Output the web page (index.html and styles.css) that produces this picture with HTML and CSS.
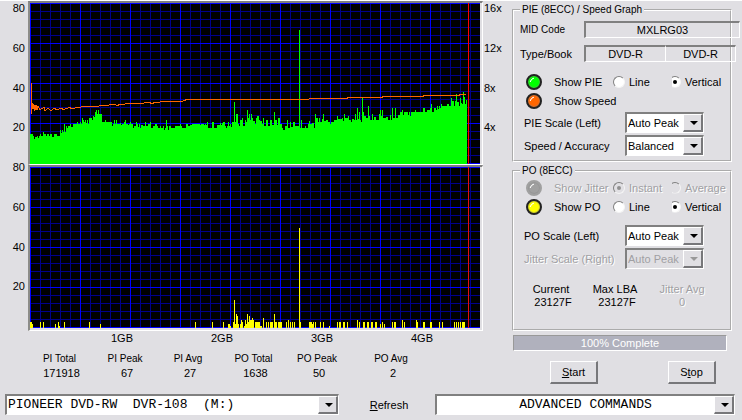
FILE: index.html
```html
<!DOCTYPE html>
<html lang="en">
<head>
<meta charset="utf-8">
<title>Disc quality scan</title>
<link rel="stylesheet" href="styles.css">
</head>
<body>
<main class="window">
  <section class="graphs">
    <div class="plots">
      <div class="axis axis-left">
        <span>80</span><span>60</span><span>40</span><span>20</span>
        <span>80</span><span>60</span><span>40</span><span>20</span>
      </div>
      <div class="charts">
        <div class="chart">
          <svg viewBox="0 0 450 161" shape-rendering="crispEdges" role="img" aria-label="PIE and speed">
            <defs>
              <pattern id="minor" width="10" height="8" patternUnits="userSpaceOnUse">
                <path d="M0 0H10V1H1V8H0Z" fill="#00008b"/>
              </pattern>
              <pattern id="major" width="50" height="40" patternUnits="userSpaceOnUse">
                <path d="M0 0H50V1H1V40H0Z" fill="#0000ff"/>
              </pattern>
            </defs>
            <rect width="450" height="161" fill="#000"/>
            <rect width="450" height="161" fill="url(#minor)"/>
            <rect width="450" height="161" fill="url(#major)"/>
            <path id="pie" fill="#00ff00"/>
            <path id="speed" fill="none" stroke="#ff6600"/>
            <path d="M438 0h1v161h-1z" fill="#ff0000"/>
          </svg>
        </div>
        <div class="chart chart-last">
          <svg viewBox="0 0 450 161" shape-rendering="crispEdges" role="img" aria-label="PO">
            <rect width="450" height="161" fill="#000"/>
            <rect width="450" height="161" fill="url(#minor)"/>
            <rect width="450" height="161" fill="url(#major)"/>
            <path id="po" fill="#ffff00"/>
            <path d="M438 0h1v161h-1z" fill="#e01010"/>
          </svg>
        </div>
      </div>
      <div class="axis axis-right">
        <span>16x</span><span>12x</span><span>8x</span><span>4x</span>
      </div>
    </div>
    <div class="capacity"><span>1GB</span><span>2GB</span><span>3GB</span><span>4GB</span></div>
    <dl class="stats">
      <div><dt>PI Total</dt><dd>171918</dd></div>
      <div><dt>PI Peak</dt><dd>67</dd></div>
      <div><dt>PI Avg</dt><dd>27</dd></div>
      <div><dt>PO Total</dt><dd>1638</dd></div>
      <div><dt>PO Peak</dt><dd>50</dd></div>
      <div><dt>PO Avg</dt><dd>2</dd></div>
    </dl>
  </section>

  <section class="panel">
    <fieldset class="group group-pie">
      <legend>PIE (8ECC) / Speed Graph</legend>
      <div class="info">
        <span class="small">MID Code</span>
        <div class="fields fields-wide"><output class="sunken">MXLRG03</output></div>
      </div>
      <div class="info">
        <span>Type/Book</span>
        <div class="fields"><output class="sunken">DVD-R</output><output class="sunken book">DVD-R</output></div>
      </div>
      <div class="toggles toggles-first">
        <label class="led-label"><input type="checkbox" class="led green" checked>Show PIE</label>
        <label class="choice"><input type="radio" name="pie">Line</label>
        <label class="choice"><input type="radio" name="pie" class="cut" checked>Vertical</label>
      </div>
      <div class="toggles">
        <label class="led-label"><input type="checkbox" class="led orange" checked>Show Speed</label>
      </div>
      <div class="setting">
        <label for="pie-scale">PIE Scale (Left)</label>
        <div class="combo"><select id="pie-scale"><option>Auto Peak</option></select></div>
      </div>
      <div class="setting">
        <label for="accuracy">Speed / Accuracy</label>
        <div class="combo"><select id="accuracy"><option>Balanced</option></select></div>
      </div>
    </fieldset>

    <fieldset class="group group-po">
      <legend>PO (8ECC)</legend>
      <div class="toggles off">
        <label class="led-label"><input type="checkbox" class="led gray" disabled>Show Jitter</label>
        <label class="choice"><input type="radio" name="jitter" disabled checked>Instant</label>
        <label class="choice"><input type="radio" name="jitter" class="cut" disabled>Average</label>
      </div>
      <div class="toggles">
        <label class="led-label"><input type="checkbox" class="led yellow" checked>Show PO</label>
        <label class="choice"><input type="radio" name="po">Line</label>
        <label class="choice"><input type="radio" name="po" class="cut" checked>Vertical</label>
      </div>
      <div class="setting setting-gap">
        <label for="po-scale">PO Scale (Left)</label>
        <div class="combo"><select id="po-scale"><option>Auto Peak</option></select></div>
      </div>
      <div class="setting off">
        <label for="jitter-scale">Jitter Scale (Right)</label>
        <div class="combo"><select id="jitter-scale" disabled><option>Auto Peak</option></select></div>
      </div>
      <dl class="readout">
        <div><dt>Current</dt><dd>23127F</dd></div>
        <div><dt>Max LBA</dt><dd>23127F</dd></div>
        <div class="off"><dt>Jitter Avg</dt><dd>0</dd></div>
      </dl>
    </fieldset>

    <div class="progress" role="progressbar" aria-valuenow="100">100% Complete</div>
    <div class="actions">
      <button type="button" class="push"><u>S</u>tart</button>
      <button type="button" class="push">S<u>t</u>op</button>
    </div>
  </section>
</main>

<footer class="bar">
  <div class="combo drive"><select aria-label="Drive"><option>PIONEER DVD-RW&nbsp; DVR-108&nbsp; (M:)</option></select></div>
  <button type="button" class="flat"><u>R</u>efresh</button>
  <div class="combo commands"><select aria-label="Commands"><option>ADVANCED COMMANDS</option></select></div>
</footer>
<script src="charts.js"></script>
</body>
</html>
```
FILE: styles.css
```css
* {
  box-sizing: border-box;
}

body {
  margin: 0;
  border-top: 1px solid #fff;
  background: #e0dfe3;
  color: #000;
  font: 11px/14px "Liberation Sans", Arial, sans-serif;
}

button,
select,
input {
  font: inherit;
  color: inherit;
  margin: 0;
}

dl,
dd {
  margin: 0;
}

.small,
legend,
.stats dt {
  font-size: 10px;
}

.off {
  color: #a09fa3;
  text-shadow: 1px 1px 0 #fff;
}

.window {
  display: flex;
}

.graphs {
  flex: 1;
  min-width: 0;
}

.plots {
  display: grid;
  grid-template-columns: 28px minmax(0, 1fr) 29px;
}

.axis {
  display: grid;
  grid-template-rows: repeat(8, 1fr);
  padding-bottom: 12px;
}

.axis-left {
  text-align: right;
  padding-right: 3px;
}

.axis-right {
  padding-left: 1px;
}

.chart {
  border: 2px solid #808080;
  border-left-color: #8c8c88;
  border-right: 1px solid #fff;
  border-bottom: 1px solid #fff;
  padding-right: 2px;
}

.chart-last {
  padding-bottom: 2px;
}

.chart svg {
  display: block;
  width: 100%;
  height: auto;
}

.capacity {
  display: grid;
  grid-template-columns: repeat(4, 1fr);
  margin: 0 40px 0 72px;
  text-align: center;
}

.stats {
  display: grid;
  grid-template-columns: 65fr 66fr 60fr 71fr 56fr 92fr;
  margin: 7px 75px 0 27px;
  text-align: center;
}

.stats dd {
  padding-left: 4px;
}

.panel {
  flex: 0 0 230px;
  padding: 3px 10px 0 0;
}

.group {
  min-width: 0;
  margin: 0;
  padding: 0 0 0 6px;
  border: 2px groove #fff;
}

.group-pie {
  padding-bottom: 4px;
}

.group-po {
  margin-top: 3px;
  padding-top: 1px;
  padding-bottom: 20px;
}

legend {
  padding: 0 2px;
  line-height: 12px;
}

.info {
  display: grid;
  grid-template-columns: 64px 1fr;
  align-items: center;
  margin-top: 5px;
}

.info + .info {
  margin-top: 7px;
}

.fields {
  display: flex;
  margin-right: -6px;
}

.fields-wide {
  margin-right: -10px;
}

.sunken {
  flex: 1;
  height: 17px;
  border: 2px solid #808080;
  border-right: 1px solid #fff;
  border-bottom: 1px solid #fff;
  text-align: center;
}

.book {
  flex: 0 0 46%;
  border-left: 0;
}

.toggles {
  display: grid;
  grid-template-columns: 93px 56px 1fr;
  align-items: center;
  height: 19px;
}

.toggles-first {
  margin-top: 10px;
}

.led-label,
.choice {
  display: flex;
  align-items: center;
  white-space: nowrap;
}

.led-label {
  gap: 12px;
  padding-left: 6px;
}

.choice {
  gap: 4px;
}

.led {
  appearance: none;
  position: relative;
  width: 16px;
  height: 16px;
  flex: none;
  border: 2px solid #222;
  border-radius: 50%;
  box-shadow: inset 0 0 0 1px #8886;
}

.led::before {
  content: "";
  position: absolute;
  left: 2px;
  top: 2px;
  width: 6px;
  height: 6px;
  border: 1px solid transparent;
  border-left-color: #fff;
  border-radius: 50%;
  transform: rotate(45deg);
}

.green { background: #00ff00; }
.orange { background: #ff6600; }
.yellow { background: #ffff00; }

.gray {
  background: #a0a0a0;
  border-color: #a0a0a0;
}

.choice input {
  appearance: none;
  display: grid;
  place-items: center;
  width: 12px;
  height: 12px;
  flex: none;
  border: 1px solid #808080;
  border-right-color: #f4f4f4;
  border-bottom-color: #f4f4f4;
  border-radius: 50%;
  background: #fff;
}

.choice input:checked::before {
  content: "";
  width: 4px;
  height: 4px;
  border-radius: 50%;
  background: #000;
}

.choice input:disabled {
  background: #e0dfe3;
}

.choice input:disabled::before {
  background: #909090;
}

.choice .cut {
  clip-path: inset(0 0 0 3px);
}

.setting {
  display: grid;
  grid-template-columns: 1fr 79px;
  align-items: center;
  margin: 2px 26px 0 0;
  padding-left: 4px;
}

.setting-gap {
  margin-top: 9px;
}

.combo {
  position: relative;
  border: 2px solid #808080;
  border-right: 1px solid #fff;
  border-bottom: 1px solid #fff;
  background: #fff;
}

.combo select {
  appearance: none;
  display: block;
  width: 100%;
  height: 18px;
  border: 0;
  border-radius: 0;
  padding: 0 16px 1px 1px;
  background: transparent;
  opacity: 1;
}

.combo::before {
  content: "";
  position: absolute;
  top: 0;
  right: 0;
  bottom: 0;
  width: 17px;
  border: 1px solid #fff;
  border-right: 2px solid #77777a;
  border-bottom: 2px solid #77777a;
  background: #e0dfe3;
}

.combo::after {
  content: "";
  position: absolute;
  top: 7px;
  right: 5px;
  border: 4px solid transparent;
  border-top-color: #000;
  border-bottom: 0;
}

.off .combo {
  background: #e0dfe3;
}

.off .combo::after {
  border-top-color: #999;
}

.readout {
  display: grid;
  grid-template-columns: 62px 66px 1fr;
  margin: 14px 10px 0 0;
  padding-right: 4px;
  text-align: center;
}

.readout div {
  line-height: 13px;
}

.readout dd {
  padding-left: 4px;
}

.readout .off dd {
  padding-left: 0;
}

.progress {
  height: 16px;
  margin: 4px 5px 0 1px;
  border: 1px solid #999;
  border-right-color: #fff;
  border-bottom-color: #fff;
  background: #b0b1bd;
  color: #fff;
  text-align: center;
}

.actions {
  display: flex;
  justify-content: space-between;
  margin: 10px 16px 0 38px;
}

.push {
  width: 48px;
  height: 23px;
  padding: 0;
  border: 1px solid #fff;
  border-right: 2px solid #77777a;
  border-bottom: 2px solid #77777a;
  background: #e0dfe3;
}

.bar {
  display: grid;
  grid-template-columns: 334fr 96fr 300fr;
  margin: 10px 7px 0 5px;
}

.bar .combo {
  font: 13px/16px "Liberation Mono", "Courier New", monospace;
}

.bar .commands select {
  padding-left: 16px;
  text-align: center;
  text-align-last: center;
}

.flat {
  border: 0;
  padding: 0 0 0 4px;
  background: transparent;
}
```
FILE: charts.js
```js
// Each pair is a column and the top of the bars from there on, in window pixels.
const pie = `30 134 33 136 34 139 35 137 37 136 38 138 39 136 40 134 41 136 43 132 44 134 46 136 47 134 49 136
50 134 52 137 54 134 57 136 60 130 61 133 62 130 63 132 64 124 65 132 66 126 67 128 68 126 70 124 71 127
73 124 76 124 77 122 78 124 80 122 81 124 82 118 83 120 84 122 85 120 86 123 87 120 88 124 89 118 92 120
93 116 94 117 95 112 96 110 97 114 98 110 99 114 102 122 105 120 106 122 112 126 113 124 114 120 115 124
116 120 117 124 120 123 121 125 122 124 124 122 125 120 126 124 128 125 129 124 130 122 131 124 133 128 134 126
136 122 137 124 138 127 139 124 140 128 141 125 143 126 145 122 146 126 148 124 150 122 151 128 153 126 155 124
157 126 158 128 160 126 161 128 163 126 164 130 165 128 166 120 167 126 168 130 169 126 171 128 174 128 175 126
180 124 181 126 182 128 186 124 188 126 190 125 192 124 200 125 201 124 204 125 205 124 206 125 207 122 208 128
212 122 214 128 217 125 220 123 221 125 222 123 223 122 225 126 226 128 227 126 228 122 229 126 230 124 231 127
232 122 234 102 235 122 236 114 238 124 239 126 240 120 242 118 243 126 245 120 246 122 247 110 248 118 249 114
250 120 251 114 252 118 253 121 255 124 256 118 257 116 259 120 260 121 262 124 263 118 264 126 266 120 268 126
270 120 272 125 274 112 275 120 277 125 278 118 280 124 282 128 283 130 285 126 287 120 288 128 290 122 291 127
293 122 295 126 299 30 300 128 301 120 302 128 305 126 306 128 308 124 309 121 310 124 312 123 314 128 315 114
316 118 318 122 319 118 320 122 322 119 323 114 324 121 326 120 328 122 330 124 331 122 334 120 337 116 338 119
342 118 343 121 344 114 345 118 348 116 349 120 351 122 352 119 354 120 355 114 356 120 357 108 358 119 359 112
360 120 361 122 362 97 363 112 364 116 366 118 368 106 369 116 370 120 372 114 373 120 374 117 376 120 379 114
380 110 381 116 382 110 383 118 386 117 388 120 390 115 391 120 392 108 393 118 395 108 396 118 398 115 400 112
402 110 403 115 404 112 408 115 409 112 410 116 411 112 415 110 416 112 423 108 425 112 427 110 430 108 431 104
432 112 434 108 436 110 437 106 438 109 439 106 440 108 441 104 442 106 447 104 449 106 451 98 452 101 454 106
455 101 456 94 457 102 459 106 460 98 461 103 462 104 463 92 464 97 465 104 466 100 467 164`;

const speed = `31 96 31 113 31 82 31 108 32 103 33 108 34 104 35 110 36 105 37 109 38 106 40 109 42 108 44 107
45 110 48 108 51 110 54 108 57 109 61 108 64 109 69 107 72 108 78 107 85 106 95 106 104 105 115 104 117 105
120 104 130 103 140 103 149 102 152 103 155 102 166 101 182 101 184 100 187 99 305 99 313 98 347 98 348 97
382 97 383 96 423 96 424 95 459 95 460 94 466 94`;

// Column and bar height.
const po = `30 6 31 6 32 4 40 6 43 6 55 4 58 6 59 2 64 6 89 6 100 4 195 6 212 6 223 6 228 4 229 4 230 2 233 6
234 28 235 4 236 14 237 12 238 4 240 4 241 8 242 6 244 2 245 8 246 4 247 14 248 6 249 12 250 8 251 8 252 10 253 8
255 6 256 6 257 6 258 6 259 6 260 2 261 2 263 10 266 6 268 6 270 6 271 6 272 6 274 14 275 6 276 6 278 6 279 6
280 6 281 6 286 6 288 8 290 6 292 6 294 6 299 100 300 6 309 6 310 6 311 6 312 4 313 6 315 6 320 6 323 6 329 2
337 6 339 6 340 6 343 6 344 6 347 6 357 8 359 6 363 6 364 6 367 6 368 6 371 6 372 6 375 6 376 6 380 4 382 6
384 4 392 6 394 6 395 6 402 8 404 6 416 8 417 6 423 6 424 6 430 6 431 6 439 6 442 6 454 6 456 6 458 6 460 6
462 6 463 6 464 6`;

const LEFT = 30;
const TOP = 3;
const HEIGHT = 161;

function pairs(text) {
  const n = text.trim().split(/\s+/).map(Number);
  const out = [];
  for (let i = 0; i < n.length; i += 2) out.push([n[i] - LEFT, n[i + 1]]);
  return out;
}

document.getElementById("pie").setAttribute("d",
  "M0 " + HEIGHT + pairs(pie).map(([x, y]) => "H" + x + "V" + (y - TOP)).join("") + "Z");

document.getElementById("speed").setAttribute("d",
  "M" + pairs(speed).map(([x, y]) => x + " " + (y - TOP + 0.5)).join("L"));

document.getElementById("po").setAttribute("d",
  pairs(po).map(([x, h]) => "M" + x + " " + HEIGHT + "v-" + h + "h1v" + h + "z").join(""));
```
